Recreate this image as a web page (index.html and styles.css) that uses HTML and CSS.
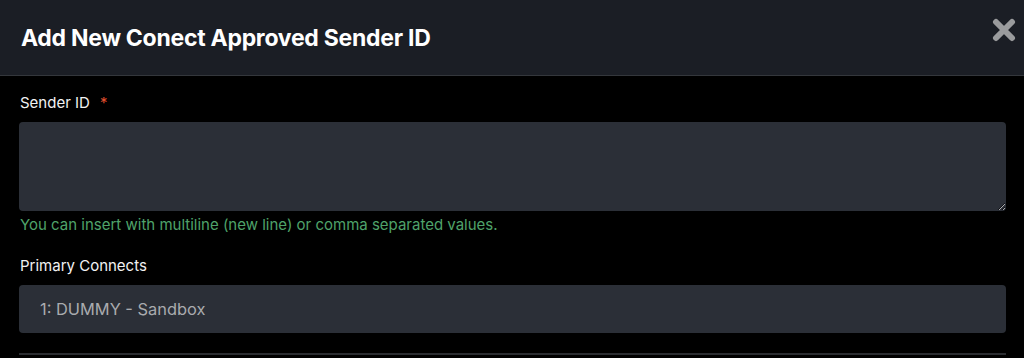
FILE: index.html
```html
<!DOCTYPE html>
<html>
<head>
<meta charset="utf-8">
<link rel="stylesheet" href="styles.css">
</head>
<body>
<div class="modal">
  <div class="modal-header">
    <h2 class="modal-title">Add New Conect Approved Sender ID</h2>
    <button class="close" aria-label="Close">
      <svg width="24" height="24" viewBox="0 0 24 24"><path d="M4 4 L20 20 M20 4 L4 20" stroke="#9a9b9d" stroke-width="6" stroke-linecap="round"/></svg>
    </button>
  </div>
  <div class="modal-body">
    <div class="field">
      <label class="label">Sender ID <span class="req">*</span></label>
      <textarea class="input textarea"></textarea>
      <div class="hint">You can insert with multiline (new line) or comma separated values.</div>
    </div>
    <div class="field field-2">
      <label class="label">Primary Connects</label>
      <div class="input select">1: DUMMY - Sandbox</div>
    </div>
    <div class="divider"></div>
  </div>
</div>
</body>
</html>
```
FILE: styles.css
```css
* { box-sizing: border-box; }
html, body { margin: 0; padding: 0; background: #000; }
body { font-family: Inter, "Open Sans", sans-serif; color: #fff; width: 1024px; height: 358px; overflow: hidden; }
.modal-header {
  height: 76px;
  background: #1b1e25;
  border-bottom: 1px solid #34373c;
  display: flex;
  align-items: flex-start;
  justify-content: space-between;
  padding: 0 8px 0 21px;
}
.modal-title {
  margin: 25px 0 0 0;
  font-size: 23px;
  font-weight: 700;
  line-height: 26px;
  letter-spacing: -0.27px;
  color: #fff;
}
.close {
  background: none;
  border: 0;
  padding: 0;
  margin-top: 18px;
  width: 24px;
  height: 24px;
  display: flex;
}
.modal-body { padding: 17px 18px 0 19px; }
.label {
  display: block;
  font-size: 15px;
  line-height: 20px;
  color: #f2f2f2;
  margin-bottom: 9px;
  padding-left: 1px;
}
.req { color: #e0502f; margin-left: 6px; }
.input {
  display: block;
  width: 100%;
  background: #2b2f37;
  border: 0;
  border-radius: 4px;
  color: #a9abae;
  font-family: inherit;
}
.textarea { height: 89px; resize: vertical; outline: none; }
.hint {
  margin-top: 4px;
  font-size: 15px;
  line-height: 20px;
  color: #4fa36a;
  padding-left: 1px;
}
.field-2 { margin-top: 21px; }
.select {
  height: 48px;
  font-size: 16.4px;
  line-height: 48px;
  padding-left: 21px;
}
.divider { margin-top: 20px; height: 2px; background: #2b2d31; }
```
